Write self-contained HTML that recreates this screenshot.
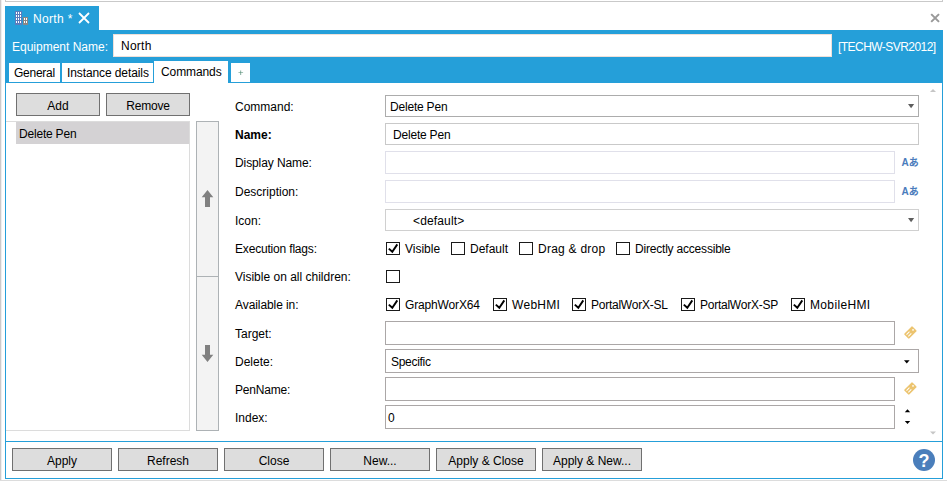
<!DOCTYPE html>
<html>
<head>
<meta charset="utf-8">
<title>North</title>
<style>
html,body{margin:0;padding:0;background:#fff;}
body{width:947px;height:484px;position:relative;overflow:hidden;font-family:"Liberation Sans","Noto Sans CJK JP",sans-serif;font-size:12px;color:#000;}
.a{position:absolute;box-sizing:border-box;}
.t{position:absolute;white-space:nowrap;line-height:16px;height:16px;margin-top:1px;}
.w{color:#fff;}
.btn{position:absolute;box-sizing:border-box;background:#ddd;border:1px solid #707070;height:23px;text-align:center;line-height:21px;padding-top:2px;}
.in{position:absolute;box-sizing:border-box;background:#fff;border:1px solid #abadb3;}
.cb{position:absolute;box-sizing:border-box;width:14px;height:13px;border:1px solid #1a1a1a;background:#fff;}
.cb svg{position:absolute;left:-1px;top:-1px;}
</style>
</head>
<body>
<!-- outer frame lines -->
<div class="a" style="left:0;top:0;width:1px;height:481px;background:#cdcaca"></div>
<div class="a" style="left:5px;top:1px;width:938px;height:1px;background:#c9c9c9"></div>
<div class="a" style="left:942px;top:0;width:1px;height:2px;background:#c9c9c9"></div>
<div class="a" style="left:5px;top:0;width:1px;height:2px;background:#c9c9c9"></div>
<div class="a" style="left:1px;top:0;width:1px;height:481px;background:#efefef"></div>
<div class="a" style="left:0;top:480px;width:947px;height:1px;background:#dcdcdc"></div>

<!-- document tab -->
<div class="a" style="left:5px;top:6px;width:94px;height:25px;background:#259fd9"></div>
<svg class="a" style="left:15px;top:11px" width="14" height="14" viewBox="0 0 14 14">
  <rect x="0" y="0" width="7" height="14" fill="#5b7dbd"/>
  <rect x="8" y="6" width="5" height="8" fill="#8a8786"/>
  <g fill="#fff">
    <rect x="1" y="1" width="1" height="2"/><rect x="3" y="1" width="1" height="2"/><rect x="5" y="1" width="1" height="2"/>
    <rect x="1" y="4" width="1" height="2"/><rect x="3" y="4" width="1" height="2"/><rect x="5" y="4" width="1" height="2"/>
    <rect x="1" y="7" width="1" height="2"/><rect x="3" y="7" width="1" height="2"/><rect x="5" y="7" width="1" height="2"/>
    <rect x="1" y="10" width="1" height="2"/><rect x="3" y="10" width="1" height="2"/><rect x="5" y="10" width="1" height="2"/>
    <rect x="9" y="7" width="1" height="2"/><rect x="11" y="7" width="1" height="2"/>
    <rect x="9" y="10" width="1" height="2"/><rect x="11" y="10" width="1" height="2"/>
  </g>
</svg>
<div class="t w" style="left:33px;top:10px;letter-spacing:0.33px;">North *</div>
<svg class="a" style="left:78px;top:12px" width="12" height="12" viewBox="0 0 12 12"><path d="M1 1 L11 11 M11 1 L1 11" stroke="#fff" stroke-width="1.8" fill="none"/></svg>
<svg class="a" style="left:929px;top:12px" width="12" height="12" viewBox="0 0 12 12"><path d="M2.2 2.1 L10 9.9 M10 2.1 L2.2 9.9" stroke="#999" stroke-width="2" fill="none"/></svg>

<!-- blue header band -->
<div class="a" style="left:5px;top:30px;width:938px;height:53px;background:#259fd9"></div>
<div class="t w" style="left:12px;top:38px;">Equipment Name:</div>
<div class="a" style="left:113px;top:34px;width:719px;height:23px;background:#fff;border:1px solid #eee0d9"></div>
<div class="t" style="left:121px;top:37px;letter-spacing:0.25px;">North</div>
<div class="t w" style="left:838px;top:38px;letter-spacing:-0.55px;">[TECHW-SVR2012]</div>

<!-- inner tabs -->
<div class="a" style="left:9px;top:63px;width:51px;height:19px;background:#fff"></div>
<div class="t" style="left:14px;top:65px;letter-spacing:-0.25px;margin-top:0;">General</div>
<div class="a" style="left:62px;top:63px;width:91px;height:19px;background:#fff"></div>
<div class="t" style="left:67px;top:65px;letter-spacing:-0.1px;margin-top:0;">Instance details</div>
<div class="a" style="left:154px;top:61px;width:74px;height:23px;background:#fff"></div>
<div class="t" style="left:161px;top:64px;letter-spacing:-0.1px;margin-top:0;">Commands</div>
<div class="a" style="left:231px;top:63px;width:19px;height:19px;background:#fff"></div>
<div class="t" style="left:238px;top:65px;color:#4f8a72;font-size:9.5px;will-change:transform;margin-top:0">+</div>

<!-- content frame -->
<div class="a" style="left:5px;top:83px;width:1px;height:396px;background:#259fd9"></div>
<div class="a" style="left:942px;top:83px;width:1px;height:396px;background:#259fd9"></div>
<div class="a" style="left:5px;top:478px;width:938px;height:1px;background:#259fd9"></div>
<div class="a" style="left:5px;top:441px;width:938px;height:1px;background:#259fd9"></div>

<!-- left panel -->
<div class="btn" style="left:16px;top:93px;width:84px;">Add</div>
<div class="btn" style="left:106px;top:93px;width:84px;letter-spacing:-0.2px;">Remove</div>
<div class="a" style="left:6px;top:121px;width:184px;height:310px;border:1px solid #dcdcdc;border-left:none;"></div>
<div class="a" style="left:16px;top:122px;width:173px;height:22px;background:#d4d2d4"></div>
<div class="t" style="left:19px;top:125px;letter-spacing:-0.2px;">Delete Pen</div>

<!-- up / down -->
<div class="a" style="left:196px;top:121px;width:23px;height:156px;background:#f3f3f3;border:1px solid #adb2b5"></div>
<div class="a" style="left:196px;top:276px;width:23px;height:155px;background:#f3f3f3;border:1px solid #adb2b5"></div>
<svg class="a" style="left:196px;top:121px" width="23" height="310" viewBox="196 121 23 310">
  <polygon points="207.5,190 213.3,197.3 210,197.3 210,207 205,207 205,197.3 201.7,197.3" fill="#808080"/>
  <polygon points="207.5,362 213.3,354.7 210,354.7 210,345 205,345 205,354.7 201.7,354.7" fill="#808080"/>
</svg>

<!-- form labels -->
<div class="t" style="left:235px;top:98px;">Command:</div>
<div class="t" style="left:235px;top:126px;font-weight:bold">Name:</div>
<div class="t" style="left:235px;top:154px;letter-spacing:-0.1px;">Display Name:</div>
<div class="t" style="left:235px;top:183px;">Description:</div>
<div class="t" style="left:235px;top:212px;">Icon:</div>
<div class="t" style="left:235px;top:240px;letter-spacing:-0.18px;">Execution flags:</div>
<div class="t" style="left:235px;top:268px;">Visible on all children:</div>
<div class="t" style="left:235px;top:296px;letter-spacing:-0.08px;">Available in:</div>
<div class="t" style="left:235px;top:325px;">Target:</div>
<div class="t" style="left:235px;top:353px;">Delete:</div>
<div class="t" style="left:235px;top:381px;letter-spacing:-0.2px;">PenName:</div>
<div class="t" style="left:235px;top:409px;">Index:</div>

<!-- form fields -->
<div class="in" style="left:385px;top:95px;width:534px;height:22px;border-color:#acacac"></div>
<div class="t" style="left:390px;top:98px;letter-spacing:-0.2px;">Delete Pen</div>
<div class="in" style="left:385px;top:123px;width:534px;height:22px;border-color:#c9c9c9"></div>
<div class="t" style="left:393px;top:126px;letter-spacing:-0.2px;">Delete Pen</div>
<div class="in" style="left:385px;top:151px;width:510px;height:23px;border-color:#e0e0ea"></div>
<div class="in" style="left:385px;top:180px;width:510px;height:23px;border-color:#e0e0ea"></div>
<div class="in" style="left:385px;top:209px;width:534px;height:22px;border-color:#d0d0d0"></div>
<div class="t" style="left:413px;top:212px;letter-spacing:0.15px;">&lt;default&gt;</div>

<div class="cb" style="left:386px;top:242px"><svg width="14" height="13" viewBox="0 0 14 13"><path d="M2.8 6.6 L6.3 9.8 L11.3 2.4" stroke="#000" stroke-width="1.9" fill="none"/></svg></div>
<div class="t" style="left:405px;top:240px;">Visible</div>
<div class="cb" style="left:451px;top:242px"></div>
<div class="t" style="left:470px;top:240px;">Default</div>
<div class="cb" style="left:519px;top:242px"></div>
<div class="t" style="left:538px;top:240px;letter-spacing:0.25px;">Drag &amp; drop</div>
<div class="cb" style="left:616px;top:242px"></div>
<div class="t" style="left:635px;top:240px;letter-spacing:-0.2px;">Directly accessible</div>

<div class="cb" style="left:386px;top:270px"></div>

<div class="cb" style="left:386px;top:298px"><svg width="14" height="13" viewBox="0 0 14 13"><path d="M2.8 6.6 L6.3 9.8 L11.3 2.4" stroke="#000" stroke-width="1.9" fill="none"/></svg></div>
<div class="t" style="left:405px;top:296px;letter-spacing:-0.15px;">GraphWorX64</div>
<div class="cb" style="left:493px;top:298px"><svg width="14" height="13" viewBox="0 0 14 13"><path d="M2.8 6.6 L6.3 9.8 L11.3 2.4" stroke="#000" stroke-width="1.9" fill="none"/></svg></div>
<div class="t" style="left:512px;top:296px;letter-spacing:0.3px;">WebHMI</div>
<div class="cb" style="left:572px;top:298px"><svg width="14" height="13" viewBox="0 0 14 13"><path d="M2.8 6.6 L6.3 9.8 L11.3 2.4" stroke="#000" stroke-width="1.9" fill="none"/></svg></div>
<div class="t" style="left:591px;top:296px;letter-spacing:-0.25px;">PortalWorX-SL</div>
<div class="cb" style="left:681px;top:298px"><svg width="14" height="13" viewBox="0 0 14 13"><path d="M2.8 6.6 L6.3 9.8 L11.3 2.4" stroke="#000" stroke-width="1.9" fill="none"/></svg></div>
<div class="t" style="left:700px;top:296px;letter-spacing:-0.25px;">PortalWorX-SP</div>
<div class="cb" style="left:791px;top:298px"><svg width="14" height="13" viewBox="0 0 14 13"><path d="M2.8 6.6 L6.3 9.8 L11.3 2.4" stroke="#000" stroke-width="1.9" fill="none"/></svg></div>
<div class="t" style="left:810px;top:296px;letter-spacing:0.35px;">MobileHMI</div>

<div class="in" style="left:385px;top:321px;width:510px;height:24px;border-color:#aba7a7"></div>
<div class="in" style="left:385px;top:349px;width:534px;height:24px;border-color:#aba7a7"></div>
<div class="t" style="left:391px;top:353px;letter-spacing:-0.3px;">Specific</div>
<div class="in" style="left:385px;top:377px;width:510px;height:24px;border-color:#aba7a7"></div>
<div class="in" style="left:385px;top:405px;width:510px;height:24px;border-color:#aba7a7"></div>
<div class="t" style="left:388px;top:409px;">0</div>

<div class="t" style="left:901.5px;top:154px;color:#4a7cbc;font-size:10px;font-weight:bold">Aあ</div>
<div class="t" style="left:901.5px;top:183px;color:#4a7cbc;font-size:10px;font-weight:bold">Aあ</div>


<!-- icons -->
<svg class="a" style="left:895px;top:84px" width="52" height="400" viewBox="895 84 52 400">
  <polygon points="908,104 914.2,104 911.1,108.2" fill="#5e5e5e"/>
  <polygon points="908,218 914.2,218 911.1,222.2" fill="#5e5e5e"/>
  <polygon points="904,360.3 909.6,360.3 906.8,363.4" fill="#000"/>
  <polygon points="904.8,412.2 910.2,412.2 907.5,409.2" fill="#000"/>
  <polygon points="904.8,421 910.2,421 907.5,424.1" fill="#000"/>
  <polygon points="930,92 936,92 933,89" fill="#c6c6c6"/>
  <polygon points="930,431.5 936,431.5 933,434.5" fill="#c6c6c6"/>
  <g transform="translate(910.4,332.5) rotate(-45)">
    <rect x="-5.8" y="-3.5" width="11.6" height="7" rx="1" fill="#ecc46f"/>
    <circle cx="3.7" cy="0" r="0.9" fill="#fff"/>
    <path d="M-4.2 -1.3 H0 M-4.2 1.3 H0" stroke="#fff" stroke-width="1"/>
  </g>
  <g transform="translate(910.4,388.5) rotate(-45)">
    <rect x="-5.8" y="-3.5" width="11.6" height="7" rx="1" fill="#ecc46f"/>
    <circle cx="3.7" cy="0" r="0.9" fill="#fff"/>
    <path d="M-4.2 -1.3 H0 M-4.2 1.3 H0" stroke="#fff" stroke-width="1"/>
  </g>
  <circle cx="924" cy="460" r="11" fill="#4a7ebb"/>
</svg>
<div class="t" style="left:913px;top:450px;width:22px;height:22px;line-height:22px;text-align:center;color:#fff;font-weight:bold;font-size:18px;margin-top:0">?</div>

<!-- bottom buttons -->
<div class="btn" style="left:12px;top:448px;width:100px;">Apply</div>
<div class="btn" style="left:118px;top:448px;width:100px;">Refresh</div>
<div class="btn" style="left:224px;top:448px;width:100px;">Close</div>
<div class="btn" style="left:330px;top:448px;width:100px;">New...</div>
<div class="btn" style="left:436px;top:448px;width:100px;">Apply &amp; Close</div>
<div class="btn" style="left:542px;top:448px;width:100px;">Apply &amp; New...</div>

</body>
</html>
